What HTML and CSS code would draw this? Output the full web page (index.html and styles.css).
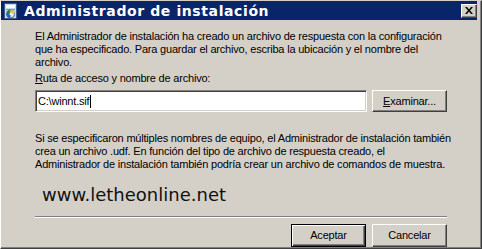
FILE: index.html
```html
<!DOCTYPE html>
<html lang="es">
<head>
<meta charset="utf-8">
<title>Administrador de instalación</title>
<link rel="stylesheet" href="styles.css">
</head>
<body>
<div class="window">
  <div class="titlebar">
    <svg class="appicon" width="16" height="16" viewBox="0 0 16 16">
      <rect x="1.5" y="0.5" width="12" height="15" rx="1" fill="#c8d8ec" stroke="#3a5a8a"/>
      <rect x="3" y="2" width="9" height="3" fill="#ffffff"/>
      <rect x="3" y="6" width="9" height="1" fill="#7f9cc4"/>
      <circle cx="7.5" cy="11" r="4" fill="#e8eef8" stroke="#4a6aa0"/>
      <path d="M7.5 11 L7.5 7 A4 4 0 0 0 3.5 11 Z" fill="#2a8a2a"/>
      <path d="M7.5 11 L3.5 11 A4 4 0 0 0 7.5 15 Z" fill="#2c5fc0"/>
      <path d="M7.5 11 L11.5 11 A4 4 0 0 0 7.5 7 Z" fill="#f0d040"/>
      <circle cx="7.5" cy="11" r="1" fill="#ffffff"/>
    </svg>
    <span class="title">Administrador de instalación</span>
    <span class="close">
      <svg width="8" height="7" viewBox="0 0 8 7">
        <path d="M0 0h2l2 2.5L6 0h2L5 3.5 8 7H6L4 4.5 2 7H0l3-3.5z" fill="#000"/>
      </svg>
    </span>
  </div>
  <div class="content">
    <p class="para">El Administrador de instalación ha creado un archivo de respuesta con la configuración<br>que ha especificado. Para guardar el archivo, escriba la ubicación y el nombre del<br>archivo.</p>
    <div class="label"><u>R</u>uta de acceso y nombre de archivo:</div>
    <div class="pathrow">
      <div class="field">C:\winnt.sif<span class="caret"></span></div>
      <button class="btn"><u>E</u>xaminar...</button>
    </div>
    <p class="para para2">Si se especificaron múltiples nombres de equipo, el Administrador de instalación también<br>crea un archivo .udf. En función del tipo de archivo de respuesta creado, el<br>Administrador de instalación también podría crear un archivo de comandos de muestra.</p>
    <div class="brand">www.letheonline.net</div>
    <div class="sep"></div>
    <div class="actions">
      <button class="btn default">Aceptar</button>
      <button class="btn">Cancelar</button>
    </div>
  </div>
</div>
</body>
</html>
```
FILE: styles.css
```css
html, body {
  margin: 0;
  padding: 0;
  background: #d4d0c8;
}

.window {
  width: 482px;
  height: 249px;
  box-sizing: border-box;
  display: flex;
  flex-direction: column;
  background: #d4d0c8;
  border-left: 1px solid #ffffff;
  border-top: 1px solid #d4d0c8;
  border-right: 1px solid #404040;
  border-bottom: 1px solid #404040;
  box-shadow: inset -1px -1px 0 #808080;
  padding: 0 4px 1px 0;
  font-family: "Liberation Sans", Arial, sans-serif;
  font-size: 11px;
  letter-spacing: -0.2px;
  color: #000;
}

.titlebar {
  height: 19px;
  flex: none;
  background: #0a246a;
  display: flex;
  align-items: center;
  padding-left: 2px;
}

.appicon {
  flex: none;
  display: block;
}

.title {
  margin-left: 5px;
  color: #ffffff;
  font-family: "DejaVu Sans", Verdana, sans-serif;
  font-weight: bold;
  font-size: 14px;
  letter-spacing: 0.6px;
  white-space: nowrap;
  flex: 1;
}

.close {
  width: 16px;
  height: 14px;
  box-sizing: border-box;
  background: #d4d0c8;
  border: 1px solid;
  border-color: #ffffff #404040 #404040 #ffffff;
  box-shadow: inset -1px -1px 0 #808080;
  display: flex;
  align-items: center;
  justify-content: center;
  padding-right: 1px;
}

.close svg {
  display: block;
}

.content {
  padding: 10px 30px 0 34px;
  display: flex;
  flex-direction: column;
}

.para {
  margin: 0;
  line-height: 13px;
  white-space: nowrap;
}

.label {
  margin-top: 3px;
  line-height: 13px;
  white-space: nowrap;
}

.pathrow {
  margin-top: 5px;
  display: flex;
  gap: 5px;
  height: 22px;
}

.field {
  width: 332px;
  height: 22px;
  box-sizing: border-box;
  background: #ffffff;
  border: 1px solid;
  border-color: #808080 #ffffff #ffffff #808080;
  box-shadow: inset 1px 1px 0 #404040, inset -1px -1px 0 #d4d0c8;
  padding: 0 0 0 2px;
  display: flex;
  align-items: center;
  white-space: nowrap;
}

.caret {
  display: inline-block;
  width: 1px;
  height: 13px;
  background: #000;
  margin-left: 1px;
}

.btn {
  width: 75px;
  height: 23px;
  box-sizing: border-box;
  padding: 0;
  margin: 0;
  background: #d4d0c8;
  border: 1px solid;
  border-color: #ffffff #404040 #404040 #ffffff;
  box-shadow: inset -1px -1px 0 #808080;
  font-family: "Liberation Sans", Arial, sans-serif;
  font-size: 11px;
  letter-spacing: -0.2px;
  color: #000;
  line-height: 13px;
}

.pathrow .btn {
  height: 22px;
}

.btn.default {
  border-color: #000000;
  box-shadow: inset 1px 1px 0 #ffffff, inset -1px -1px 0 #404040, inset -2px -2px 0 #808080;
}

.para2 {
  margin-top: 20px;
}

.brand {
  margin-top: 14px;
  margin-left: 7px;
  font-family: "DejaVu Sans", Verdana, sans-serif;
  font-size: 18px;
  line-height: 20px;
  letter-spacing: 0;
  color: #111;
  white-space: nowrap;
}

.sep {
  margin-top: 11px;
  height: 0;
  border-top: 1px solid #808080;
  border-bottom: 1px solid #ffffff;
}

.actions {
  margin-top: 6px;
  display: flex;
  justify-content: flex-end;
  gap: 6px;
}
```
